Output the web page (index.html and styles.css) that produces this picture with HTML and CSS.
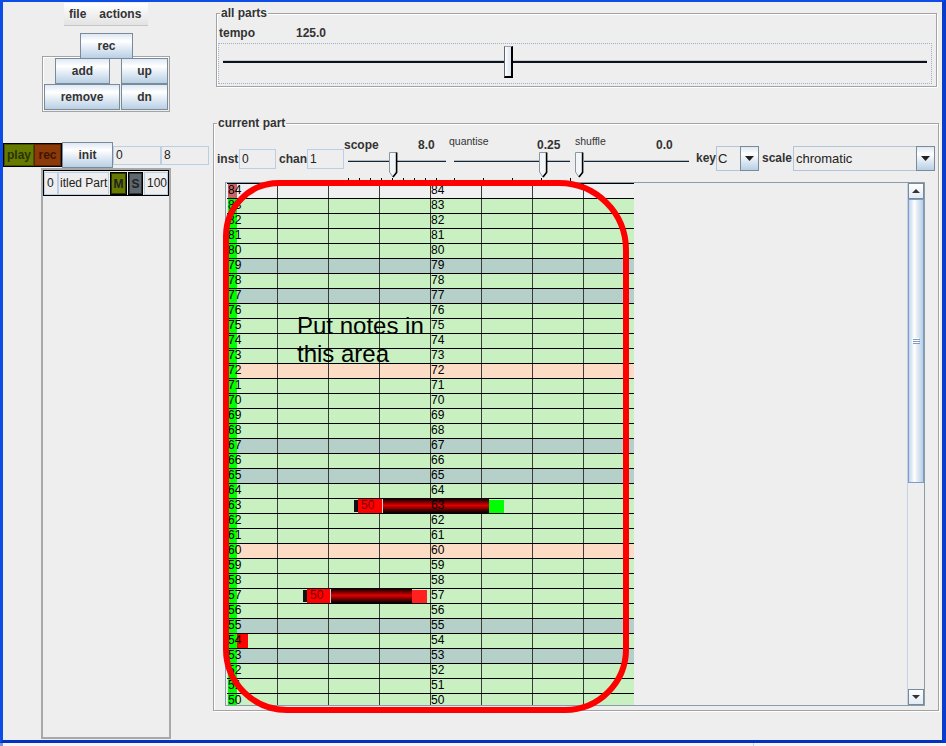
FILE: index.html
```html
<!DOCTYPE html>
<html lang="en">
<head>
<meta charset="utf-8">
<title>Sequencer</title>
<link rel="stylesheet" href="styles.css">
</head>
<body>
<div class="window">
  <div class="leftcol">
    <div class="menubar"><span class="menu">file</span><span class="menu">actions</span></div>
    <button class="btn rec-top">rec</button>
    <div class="partbox">
      <div class="pb-row"><button class="btn b-add">add</button><button class="btn b-up">up</button></div>
      <div class="pb-row"><button class="btn b-remove">remove</button><button class="btn b-dn">dn</button></div>
    </div>
    <div class="transport">
      <div class="tgroup"><span class="tbtn play">play</span><span class="tbtn trec">rec</span></div>
      <button class="btn b-init">init</button>
      <span class="field tf">0</span><span class="field tf">8</span>
    </div>
    <div class="partlist">
      <div class="partrow">
        <span class="field p-idx">0</span>
        <span class="field p-name">itled Part</span>
        <span class="ms mute">M</span>
        <span class="ms solo">S</span>
        <span class="field p-vol">100</span>
      </div>
    </div>
  </div>

  <div class="rightcol">
    <fieldset class="group allparts">
      <legend>all parts</legend>
      <div class="temporow"><span class="tempo-lbl">tempo</span><span>125.0</span></div>
      <div class="tempo-slider"><div class="hthumb"></div></div>
    </fieldset>

    <fieldset class="group curpart">
      <legend>current part</legend>
      <div class="header">
        <span class="hl w-inst">inst</span>
        <span class="field hf">0</span>
        <span class="hl w-chan">chan</span>
        <span class="field hf">1</span>
        <div class="sl sl-scope">
          <div class="sl-top"><span class="sl-name">scope</span><span>8.0</span></div>
          <div class="sl-body">
            <svg class="sl-thumb" width="9" height="26" viewBox="0 0 9 26"><path d="M0.5 0.5H7.5V20L4 25L0.5 20Z" fill="#f3f6f9" stroke="#8c96a0"/><path d="M7.6 0.5V20.5L4 25" fill="none" stroke="#000" stroke-width="1.6"/></svg>
            <div class="ticks"></div>
          </div>
        </div>
        <div class="sl sl-quant">
          <div class="sl-top"><span class="sl-name small">quantise</span><span>0.25</span></div>
          <div class="sl-body">
            <svg class="sl-thumb" width="9" height="26" viewBox="0 0 9 26"><path d="M0.5 0.5H7.5V20L4 25L0.5 20Z" fill="#f3f6f9" stroke="#8c96a0"/><path d="M7.6 0.5V20.5L4 25" fill="none" stroke="#000" stroke-width="1.6"/></svg>
            <div class="ticks"></div>
          </div>
        </div>
        <div class="sl sl-shuf">
          <div class="sl-top"><span class="sl-name small">shuffle</span><span>0.0</span></div>
          <div class="sl-body">
            <svg class="sl-thumb" width="9" height="26" viewBox="0 0 9 26"><path d="M0.5 0.5H7.5V20L4 25L0.5 20Z" fill="#f3f6f9" stroke="#8c96a0"/><path d="M7.6 0.5V20.5L4 25" fill="none" stroke="#000" stroke-width="1.6"/></svg>
            <div class="ticks"></div>
          </div>
        </div>
        <span class="hl w-key">key</span>
        <div class="combo combo-key">
          <span class="cval">C</span>
          <span class="carrow"><svg width="9" height="5" viewBox="0 0 9 5"><path d="M0 0H9L4.5 5Z" fill="#222"/></svg></span>
        </div>
        <span class="hl w-scale">scale</span>
        <div class="combo combo-scale">
          <span class="cval">chromatic</span>
          <span class="carrow"><svg width="9" height="5" viewBox="0 0 9 5"><path d="M0 0H9L4.5 5Z" fill="#222"/></svg></span>
        </div>
      </div>

      <div class="pane">
        <div class="roll">
          <div class="row w"><div class="lc"><span class="key kr">84</span></div><span class="num">84</span></div>
          <div class="row g"><div class="lc"><span class="key">83</span></div><span class="num">83</span></div>
          <div class="row g"><div class="lc"><span class="key">82</span></div><span class="num">82</span></div>
          <div class="row g"><div class="lc"><span class="key">81</span></div><span class="num">81</span></div>
          <div class="row g"><div class="lc"><span class="key">80</span></div><span class="num">80</span></div>
          <div class="row d"><div class="lc"><span class="key">79</span></div><span class="num">79</span></div>
          <div class="row g"><div class="lc"><span class="key">78</span></div><span class="num">78</span></div>
          <div class="row d"><div class="lc"><span class="key">77</span></div><span class="num">77</span></div>
          <div class="row g"><div class="lc"><span class="key">76</span></div><span class="num">76</span></div>
          <div class="row g"><div class="lc"><span class="key">75</span></div><span class="num">75</span></div>
          <div class="row g"><div class="lc"><span class="key">74</span></div><span class="num">74</span></div>
          <div class="row g"><div class="lc"><span class="key">73</span></div><span class="num">73</span></div>
          <div class="row c"><div class="lc"><span class="key">72</span></div><span class="num">72</span></div>
          <div class="row g"><div class="lc"><span class="key">71</span></div><span class="num">71</span></div>
          <div class="row g"><div class="lc"><span class="key">70</span></div><span class="num">70</span></div>
          <div class="row g"><div class="lc"><span class="key">69</span></div><span class="num">69</span></div>
          <div class="row g"><div class="lc"><span class="key">68</span></div><span class="num">68</span></div>
          <div class="row d"><div class="lc"><span class="key">67</span></div><span class="num">67</span></div>
          <div class="row g"><div class="lc"><span class="key">66</span></div><span class="num">66</span></div>
          <div class="row d"><div class="lc"><span class="key">65</span></div><span class="num">65</span></div>
          <div class="row g"><div class="lc"><span class="key">64</span></div><span class="num">64</span></div>
          <div class="row g"><div class="lc"><span class="key">63</span></div><span class="num">63</span>
            <div class="note n63"><span class="nmark"></span><span class="nlabel">50</span><span class="nbar"></span><span class="nend on"></span></div>
          </div>
          <div class="row g"><div class="lc"><span class="key">62</span></div><span class="num">62</span></div>
          <div class="row g"><div class="lc"><span class="key">61</span></div><span class="num">61</span></div>
          <div class="row c"><div class="lc"><span class="key">60</span></div><span class="num">60</span></div>
          <div class="row g"><div class="lc"><span class="key">59</span></div><span class="num">59</span></div>
          <div class="row g"><div class="lc"><span class="key">58</span></div><span class="num">58</span></div>
          <div class="row g"><div class="lc"><span class="key">57</span></div><span class="num">57</span>
            <div class="note n57"><span class="nmark"></span><span class="nlabel">50</span><span class="nbar"></span><span class="nend off"></span></div>
          </div>
          <div class="row g"><div class="lc"><span class="key">56</span></div><span class="num">56</span></div>
          <div class="row d"><div class="lc"><span class="key">55</span></div><span class="num">55</span></div>
          <div class="row g"><div class="lc"><span class="key">54</span><span class="sel"></span></div><span class="num">54</span></div>
          <div class="row d"><div class="lc"><span class="key">53</span></div><span class="num">53</span></div>
          <div class="row g"><div class="lc"><span class="key">52</span></div><span class="num">52</span></div>
          <div class="row g"><div class="lc"><span class="key">51</span></div><span class="num">51</span></div>
          <div class="row g"><div class="lc"><span class="key">50</span></div><span class="num">50</span></div>
        </div>
        <div class="vscroll">
          <div class="sb-btn"><svg width="8" height="4" viewBox="0 0 8 4"><path d="M0 4H8L4 0Z" fill="#333"/></svg></div>
          <div class="sb-thumb"><svg width="8" height="6" viewBox="0 0 8 6"><path d="M0 0.5H7M0 2.5H7M0 4.5H7" stroke="#fff"/><path d="M1 1.5H8M1 3.5H8M1 5.5H8" stroke="#7f9cc2"/></svg></div>
          <div class="sb-track"></div>
          <div class="sb-btn"><svg width="8" height="4" viewBox="0 0 8 4"><path d="M0 0H8L4 4Z" fill="#333"/></svg></div>
        </div>
      </div>
    </fieldset>
  </div>

  <div class="annot"></div>
  <div class="annot-text">Put notes in<br>this area</div>
</div>
<div class="taskbar"></div>
</body>
</html>
```

FILE: styles.css
```css
* { box-sizing: border-box; }
html, body { margin: 0; padding: 0; }
body {
  width: 946px; height: 746px; overflow: hidden;
  background: #f4f4f4;
  font-family: "Liberation Sans", Arial, sans-serif;
  font-size: 12px; color: #333;
}
.window {
  position: relative; display: flex;
  width: 946px; height: 743px;
  border-style: solid; border-width: 2px 4px 3px 3px;
  border-color: #0b4de6 #0a3ccc #0431c4 #0b4de6;
  background: #eeeeee;
}
.taskbar {
  height: 3px;
  background: linear-gradient(to right, #7d95e0 0 3px, #f5f5f5 3px 753px, #c9d3e0 753px 754px, #f5f5f5 754px);
}

/* ---------- left column ---------- */
.leftcol { width: 210px; flex: none; display: flex; flex-direction: column; align-items: flex-start; }
.menubar {
  display: flex; width: 84px; height: 23px; margin: 1px 0 0 61px; padding-left: 5px;
  border-bottom: 1px solid #c6c6c6;
  background: linear-gradient(#ffffff, #e3e3e3);
  font-weight: bold; line-height: 22px; color: #333;
}
.menu + .menu { margin-left: 13px; }

.btn {
  display: flex; align-items: center; justify-content: center;
  height: 26px; margin: 0; padding: 0;
  border: 1px solid #7a8a99;
  background: linear-gradient(#dde8f3, #ffffff 30%, #b8cfe5);
  font: bold 12px "Liberation Sans", Arial, sans-serif; color: #333;
}
.rec-top { position: relative; z-index: 1; width: 53px; margin: 7px 0 0 77px; }
.partbox {
  width: 128px; height: 56px; margin: -3px 0 0 39px; padding: 1px;
  border: 1px solid #a3a3a3; box-shadow: inset 1px 1px 0 #fff;
}
.pb-row { display: flex; }
.b-add { width: 55px; margin-left: 11px; }
.b-up { width: 47px; margin-left: 11px; }
.b-remove { width: 76px; }
.b-dn { width: 47px; margin-left: 1px; }

.transport { display: flex; align-items: center; height: 26px; margin-top: 30px; }
.tgroup { display: flex; height: 24px; border: 1px solid #000; }
.tbtn { display: flex; align-items: center; justify-content: center; height: 22px; font-weight: bold; }
.play { width: 30px; background: #667a00; border: 1px solid #455200; color: #2b3300; }
.trec { width: 27px; background: #8b3a08; border: 1px solid #5c2503; color: #3d1600; }
.b-init { width: 51px; }
.field {
  display: block; height: 19px; padding-left: 2px;
  border: 1px solid #b8cfe5; background: #eeeeee;
  line-height: 17px; font-size: 12px; color: #222;
  white-space: nowrap; overflow: hidden;
}
.tf { width: 48px; }

.partlist { width: 130px; height: 571px; margin-left: 38px; border: 2px solid #a8a8a8; }
.partrow { display: flex; height: 26px; padding-top: 1px; border: 1px solid #000; }
.partrow .field { height: 23px; line-height: 21px; }
.p-idx { width: 14px; }
.p-name { width: 51px; padding-left: 1px; }
.ms {
  display: flex; align-items: center; justify-content: center;
  height: 23px; margin-left: 1px; border: 1px solid #000;
  font-weight: bold; color: #222;
}
.mute { width: 17px; background: #667a00; box-shadow: inset 0 0 0 1px #2f3800; }
.solo { width: 15px; background: #5d6870; box-shadow: inset 0 0 0 1px #30383e; }
.p-vol { width: 24px; margin-left: 1px; }

/* ---------- right column ---------- */
.rightcol { flex: 1; display: flex; flex-direction: column; align-items: flex-start; }
.group {
  margin: 0; padding: 0; min-width: 0;
  border: 1px solid #a3a3a3;
  box-shadow: 1px 1px 0 #fff, inset 1px 1px 0 #fff;
}
.group legend {
  margin-left: 3px; padding: 0 1px;
  font-weight: bold; font-size: 12px; line-height: 13px; color: #333;
}
.allparts { width: 721px; margin: 5px 0 0 3px; padding: 6px 0 2px 0; }
.temporow { display: flex; padding-left: 2px; font-weight: bold; line-height: 14px; }
.tempo-lbl { width: 77px; }
.tempo-slider {
  width: 714px; height: 41px; margin: 3px 0 0 1px; padding: 2px 0 0 285px;
  border: 1px dotted #9db0c6;
  background-image: linear-gradient(#b8cfe5, #b8cfe5), linear-gradient(#111, #111);
  background-size: 704px 1px, 704px 2px;
  background-position: 4px 16px, 4px 17px;
  background-repeat: no-repeat;
}
.hthumb {
  width: 9px; height: 32px;
  border-style: solid; border-width: 1px 2px 2px 1px;
  border-color: #9aa3ad #000 #000 #5c6670;
  background: linear-gradient(to right, #ffffff, #dbe5ef);
}

.curpart { width: 726px; margin-top: 30px; padding: 7px 0 4px 0; }
.header { display: flex; align-items: flex-start; height: 45px; margin-left: 3px; }
.hl { font-weight: bold; line-height: 14px; margin-top: 15px; color: #333; }
.w-inst { width: 22px; }
.w-chan { width: 28px; margin-left: 3px; }
.hf { width: 37px; height: 20px; margin-top: 12px; line-height: 18px; }

.sl { display: flex; flex-direction: column; }
.sl-top { display: flex; align-items: flex-start; height: 14px; margin-top: 1px; font-weight: bold; line-height: 14px; }
.sl-name.small { font-weight: normal; font-size: 10.5px; line-height: 12px; margin-top: -3px; }
.sl-body {
  height: 30px;
  background-image: linear-gradient(#a9bdd2, #a9bdd2), linear-gradient(#222, #222);
  background-repeat: no-repeat;
}
.sl-thumb { display: block; }
.ticks { height: 4px; }

.sl-scope { width: 102px; }
.sl-scope .sl-name { width: 74px; }
.sl-scope .sl-body { background-size: 98px 1px, 98px 1px; background-position: 4px 8px, 4px 9px; }
.sl-scope .sl-thumb { margin-left: 45px; }
.sl-scope .ticks { margin-left: 4px; width: 99px; background: repeating-linear-gradient(to right, #000 0 1px, transparent 1px 11px); }

.sl-quant { width: 121px; margin-left: 3px; }
.sl-quant .sl-name { width: 88px; }
.sl-quant .sl-body { background-size: 116px 1px, 116px 1px; background-position: 5px 8px, 5px 9px; }
.sl-quant .sl-thumb { margin-left: 90px; }
.sl-quant .ticks { margin-left: 5px; width: 117px; background: repeating-linear-gradient(to right, #000 0 1px, transparent 1px 29px); }

.sl-shuf { width: 120px; }
.sl-shuf .sl-top { padding-left: 5px; }
.sl-shuf .sl-name { width: 81px; }
.sl-shuf .sl-body { background-size: 105px 1px, 105px 1px; background-position: 14px 8px, 14px 9px; }
.sl-shuf .sl-thumb { margin-left: 5px; }
.sl-shuf .ticks { margin-left: 0; width: 1px; background: #000; }

.w-key { width: 20px; margin-left: 6px; margin-top: 14px; }
.w-scale { width: 31px; margin-left: 3px; margin-top: 14px; }
.combo { display: flex; height: 25px; margin-top: 9px; border: 1px solid #b3c6d9; background: #eeeeee; }
.combo-key { width: 43px; }
.combo-scale { width: 142px; }
.cval { flex: 1; padding-left: 1px; line-height: 23px; font-size: 13px; color: #222; white-space: nowrap; }
.combo-scale .cval { padding-left: 2px; }
.carrow {
  display: flex; align-items: center; justify-content: center;
  width: 19px; margin: -1px -1px -1px 0;
  border: 1px solid #7a8a99;
  background: linear-gradient(#dde8f3, #ffffff 30%, #b8cfe5);
}

/* ---------- piano roll ---------- */
.pane { display: flex; width: 700px; height: 524px; margin-left: 11px; border: 1px solid #8a9bab; }
.roll { position: relative; width: 681px; height: 522px; overflow: hidden; padding-left: 1px; background: #eeeeee; }
.row {
  position: relative; display: grid; grid-template-columns: 204px auto;
  width: 407px; height: 15px; border-top: 1px solid #000;
  background-image: linear-gradient(to right, transparent 50px, #3a3a3a 50px);
  background-size: 51px 100%; background-repeat: repeat-x;
  background-color: #c8f0c0;
  font-size: 12px; line-height: 12px; color: #000;
}
.row.d { background-color: #b4d0c8; }
.row.c { background-color: #fcdcc4; }
.row.w { background-color: #f0f0f0; }
.lc { display: flex; padding-left: 1px; }
.key { position: relative; z-index: 2; width: 9px; height: 14px; background: #00ff00; white-space: nowrap; }
.key.kr { background: #c86464; }
.sel { width: 11px; height: 14px; background: #ff0000; }
.num { position: relative; z-index: 2; white-space: nowrap; }

.note { position: absolute; z-index: 1; top: -1px; display: flex; align-items: flex-start; height: 15px; }
.nmark { width: 4px; height: 12px; margin-top: 2px; background: #111; }
.nlabel {
  height: 14px; margin-top: 1px; padding-left: 3px;
  border-right: 1px solid #d8d8d8; background: #ff0000;
  color: #7a0000; line-height: 12px;
}
.nbar { height: 15px; background: linear-gradient(#000, #3a0000 15%, #e00000 50%, #3a0000 85%, #000); }
.nend { width: 15px; height: 13px; margin-top: 2px; }
.nend.on { background: #00ff00; }
.nend.off { background: #ff2020; }
.n63 { left: 127px; }
.n63 .nlabel { width: 25px; }
.n63 .nbar { width: 106px; }
.n57 { left: 76px; }
.n57 .nlabel { width: 24px; }
.n57 .nbar { width: 81px; }

.vscroll { display: flex; flex-direction: column; width: 17px; border-left: 1px solid #c4d3e2; background: #eeeeee; }
.sb-btn {
  display: flex; align-items: center; justify-content: center;
  height: 16px; border: 1px solid #7a8a99;
  background: linear-gradient(#ffffff, #e3ebf3);
}
.sb-thumb {
  display: flex; align-items: center; justify-content: center;
  height: 284px; border: 1px solid #7b9bc9;
  background: linear-gradient(to right, #c3d6ea, #ffffff 40%, #e2ebf4 60%, #b8cfe5);
}
.sb-track { flex: 1; }

/* ---------- annotation overlay ---------- */
.annot {
  position: absolute; left: 220px; top: 178px; z-index: 5;
  width: 406px; height: 533px;
  border: 6px solid #ff0000;
  border-radius: 56px 70px 64px 64px;
  pointer-events: none;
}
.annot-text {
  position: absolute; left: 294px; top: 310px; z-index: 4;
  font-size: 24px; line-height: 28px; color: #000;
}
```
